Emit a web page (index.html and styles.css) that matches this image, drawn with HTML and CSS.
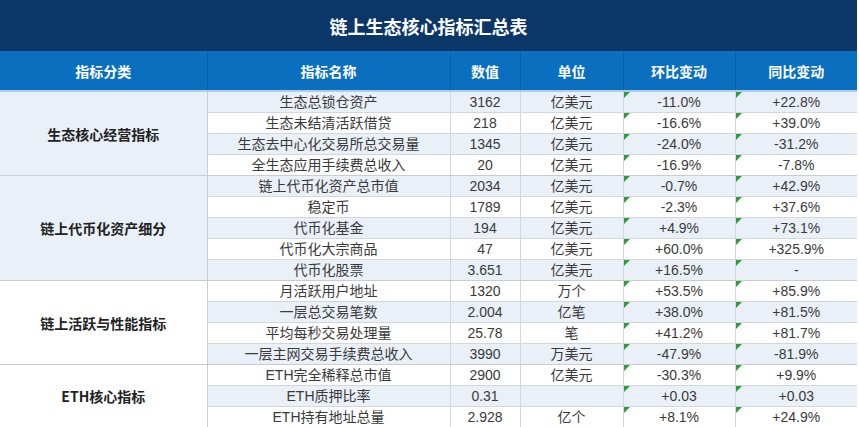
FILE: index.html
```html
<!DOCTYPE html>
<html lang="zh">
<head>
<meta charset="utf-8">
<title>链上生态核心指标汇总表</title>
<link rel="stylesheet" href="styles.css">
</head>
<body>
<div class="sheet">
  <div class="title">链上生态核心指标汇总表</div>
  <table class="grid">
    <colgroup>
      <col class="c1"><col class="c2"><col class="c3"><col class="c4"><col class="c5"><col class="c6">
    </colgroup>
    <thead>
      <tr>
        <th>指标分类</th><th>指标名称</th><th>数值</th><th>单位</th><th>环比变动</th><th>同比变动</th>
      </tr>
    </thead>
    <tbody>
      <tr class="odd">
        <td class="cat shaded" rowspan="4">生态核心经营指标</td>
        <td>生态总锁仓资产</td><td>3162</td><td>亿美元</td><td class="flag">-11.0%</td><td class="flag">+22.8%</td>
      </tr>
      <tr><td>生态未结清活跃借贷</td><td>218</td><td>亿美元</td><td class="flag">-16.6%</td><td class="flag">+39.0%</td></tr>
      <tr class="odd"><td>生态去中心化交易所总交易量</td><td>1345</td><td>亿美元</td><td class="flag">-24.0%</td><td class="flag">-31.2%</td></tr>
      <tr class="gend"><td>全生态应用手续费总收入</td><td>20</td><td>亿美元</td><td class="flag">-16.9%</td><td class="flag">-7.8%</td></tr>

      <tr class="odd">
        <td class="cat shaded" rowspan="5">链上代币化资产细分</td>
        <td>链上代币化资产总市值</td><td>2034</td><td>亿美元</td><td class="flag">-0.7%</td><td class="flag">+42.9%</td>
      </tr>
      <tr><td>稳定币</td><td>1789</td><td>亿美元</td><td class="flag">-2.3%</td><td class="flag">+37.6%</td></tr>
      <tr class="odd"><td>代币化基金</td><td>194</td><td>亿美元</td><td class="flag">+4.9%</td><td class="flag">+73.1%</td></tr>
      <tr><td>代币化大宗商品</td><td>47</td><td>亿美元</td><td class="flag">+60.0%</td><td class="flag">+325.9%</td></tr>
      <tr class="odd gend"><td>代币化股票</td><td>3.651</td><td>亿美元</td><td class="flag">+16.5%</td><td class="flag">-</td></tr>

      <tr>
        <td class="cat" rowspan="4">链上活跃与性能指标</td>
        <td>月活跃用户地址</td><td>1320</td><td>万个</td><td class="flag">+53.5%</td><td class="flag">+85.9%</td>
      </tr>
      <tr class="odd"><td>一层总交易笔数</td><td>2.004</td><td>亿笔</td><td class="flag">+38.0%</td><td class="flag">+81.5%</td></tr>
      <tr><td>平均每秒交易处理量</td><td>25.78</td><td>笔</td><td class="flag">+41.2%</td><td class="flag">+81.7%</td></tr>
      <tr class="odd gend"><td>一层主网交易手续费总收入</td><td>3990</td><td>万美元</td><td class="flag">-47.9%</td><td class="flag">-81.9%</td></tr>

      <tr>
        <td class="cat" rowspan="3">ETH核心指标</td>
        <td>ETH完全稀释总市值</td><td>2900</td><td>亿美元</td><td class="flag">-30.3%</td><td class="flag">+9.9%</td>
      </tr>
      <tr class="odd"><td>ETH质押比率</td><td>0.31</td><td></td><td class="flag">+0.03</td><td class="flag">+0.03</td></tr>
      <tr><td>ETH持有地址总量</td><td>2.928</td><td>亿个</td><td class="flag">+8.1%</td><td class="flag">+24.9%</td></tr>
    </tbody>
  </table>
</div>
</body>
</html>
```

FILE: styles.css
```css
html, body {
  margin: 0;
  padding: 0;
  background: #ffffff;
}

body {
  font-family: "Liberation Sans", Arial, "Noto Sans CJK SC", sans-serif;
  color: #3a3a3a;
  overflow: hidden;
}

.sheet {
  width: 857px;
}

.title {
  height: 51px;
  background: #0b3668;
  color: #ffffff;
  font-family: "Noto Sans CJK SC", sans-serif;
  font-weight: 700;
  font-size: 18px;
  display: flex;
  align-items: center;
  justify-content: center;
}

.grid {
  width: 857px;
  border-collapse: collapse;
  table-layout: fixed;
}

.c1 { width: 207px; }
.c2 { width: 243px; }
.c3 { width: 70px; }
.c4 { width: 103px; }
.c5 { width: 112px; }
.c6 { width: 122px; }

.grid th {
  height: 39px;
  padding: 0;
  background: #0a6fbf;
  color: #ffffff;
  font-family: "Noto Sans CJK SC", sans-serif;
  font-weight: 700;
  font-size: 14px;
  text-align: center;
  border-left: 1px solid #0a5fa6;
  border-bottom: 2px solid #b5cbe3;
}

.grid th:first-child {
  border-left: none;
}

.grid td {
  height: 20px;
  padding: 0;
  font-size: 14px;
  line-height: 20px;
  text-align: center;
  border-left: 1px solid #d3d6db;
  border-bottom: 1px solid #d3d6db;
  background: #ffffff;
  white-space: nowrap;
  position: relative;
}

.grid tr.odd td {
  background: #eaf0f8;
}

.grid td:first-child {
  border-left: none;
}

.grid td.cat {
  font-family: "Noto Sans CJK SC", sans-serif;
  font-weight: 700;
  color: #222222;
  background: #ffffff;
  border-left: none;
  border-right: 1px solid #c9ccd1;
  border-bottom: 1px solid #c9ccd1;
}

.grid tr td.cat.shaded {
  background: #eaf0f8;
}

.grid tr.gend td {
  border-bottom-color: #c9ccd1;
}

.grid td.flag::before {
  content: "";
  position: absolute;
  left: 0;
  top: 0;
  width: 0;
  height: 0;
  border-top: 6px solid #2e9b3c;
  border-right: 6px solid transparent;
}
```
